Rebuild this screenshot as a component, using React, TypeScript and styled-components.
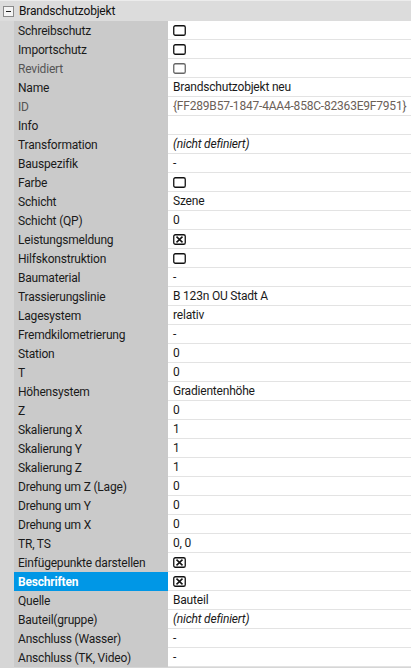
import styled, { createGlobalStyle } from "styled-components";

const GlobalStyle = createGlobalStyle`
  html, body {
    margin: 0;
    padding: 0;
    background: #ffffff;
  }
  body {
    font-family: Roboto, "Open Sans", sans-serif;
    font-size: 12px;
    letter-spacing: -0.2px;
    color: #1a1a1a;
  }
`;

type Kind = "text" | "check" | "italic";

interface IRow {
  label: string;
  kind: Kind;
  value?: string;
  checked?: boolean;
  disabled?: boolean;
  selected?: boolean;
}

const rows: IRow[] = [
  { label: "Schreibschutz", kind: "check" },
  { label: "Importschutz", kind: "check" },
  { label: "Revidiert", kind: "check", disabled: true },
  { label: "Name", kind: "text", value: "Brandschutzobjekt neu" },
  { label: "ID", kind: "text", value: "{FF289B57-1847-4AA4-858C-82363E9F7951}", disabled: true },
  { label: "Info", kind: "text", value: "" },
  { label: "Transformation", kind: "italic", value: "(nicht definiert)" },
  { label: "Bauspezifik", kind: "text", value: "-" },
  { label: "Farbe", kind: "check" },
  { label: "Schicht", kind: "text", value: "Szene" },
  { label: "Schicht (QP)", kind: "text", value: "0" },
  { label: "Leistungsmeldung", kind: "check", checked: true },
  { label: "Hilfskonstruktion", kind: "check" },
  { label: "Baumaterial", kind: "text", value: "-" },
  { label: "Trassierungslinie", kind: "text", value: "B 123n OU Stadt A" },
  { label: "Lagesystem", kind: "text", value: "relativ" },
  { label: "Fremdkilometrierung", kind: "text", value: "-" },
  { label: "Station", kind: "text", value: "0" },
  { label: "T", kind: "text", value: "0" },
  { label: "Höhensystem", kind: "text", value: "Gradientenhöhe" },
  { label: "Z", kind: "text", value: "0" },
  { label: "Skalierung X", kind: "text", value: "1" },
  { label: "Skalierung Y", kind: "text", value: "1" },
  { label: "Skalierung Z", kind: "text", value: "1" },
  { label: "Drehung um Z (Lage)", kind: "text", value: "0" },
  { label: "Drehung um Y", kind: "text", value: "0" },
  { label: "Drehung um X", kind: "text", value: "0" },
  { label: "TR, TS", kind: "text", value: "0, 0" },
  { label: "Einfügepunkte darstellen", kind: "check", checked: true },
  { label: "Beschriften", kind: "check", checked: true, selected: true },
  { label: "Quelle", kind: "text", value: "Bauteil" },
  { label: "Bauteil(gruppe)", kind: "italic", value: "(nicht definiert)" },
  { label: "Anschluss (Wasser)", kind: "text", value: "-" },
  { label: "Anschluss (TK, Video)", kind: "text", value: "-" },
];

const Grid = styled.div`
  width: 411px;
  height: 668px;
  overflow: hidden;
  background: #d6d6d6;
`;

const CategoryHeader = styled.div`
  height: 21px;
  display: flex;
  align-items: center;
  gap: 5px;
  padding-left: 3px;
  background: #dcdcdc;
  border-top: 1px solid #ececec;
  box-sizing: border-box;
  color: #111;
`;

const Row = styled.div`
  display: grid;
  grid-template-columns: 14px 154px 1fr;
  height: 19px;
`;

const Gutter = styled.div`
  background: #d6d6d6;
`;

const Label = styled.div<{ $disabled?: boolean; $selected?: boolean }>`
  display: flex;
  align-items: center;
  padding-left: 4px;
  white-space: nowrap;
  overflow: hidden;
  background: ${(p) => (p.$selected ? "#0097e6" : "#cacaca")};
  color: ${(p) => (p.$selected ? "#ffffff" : p.$disabled ? "#555555" : "#1a1a1a")};
  font-weight: ${(p) => (p.$selected ? 700 : 400)};
`;

const Value = styled.div<{ $disabled?: boolean; $italic?: boolean }>`
  display: flex;
  align-items: center;
  padding-left: 5px;
  white-space: nowrap;
  overflow: hidden;
  background: #ffffff;
  border-bottom: 1px solid #e3e3e3;
  color: ${(p) => (p.$disabled ? "#6b6058" : "#1a1a1a")};
  font-style: ${(p) => (p.$italic ? "italic" : "normal")};
`;

const CheckBox = ({ checked, disabled }: { checked?: boolean; disabled?: boolean }) => {
  const c = disabled ? "#666" : "#111";
  return (
    <svg width="13" height="11" viewBox="0 0 13 11">
      <rect x="0.75" y="0.75" width="11.5" height="9.5" rx="1.6" fill="none" stroke={c} strokeWidth="1.3" />
      {checked && <path d="M3.5 2.6 L9.5 8.4 M9.5 2.6 L3.5 8.4" stroke={c} strokeWidth="1.5" />}
    </svg>
  );
};

const Collapse = () => (
  <svg width="11" height="11" viewBox="0 0 11 11">
    <rect x="0.5" y="0.5" width="10" height="10" fill="#f4f4f4" stroke="#8a8a8a" />
    <path d="M3 5.5 H8" stroke="#222" strokeWidth="1" />
  </svg>
);

const App = () => {
  return (
    <Grid>
      <GlobalStyle />
      <CategoryHeader>
        <Collapse />
        <span>Brandschutzobjekt</span>
      </CategoryHeader>
      {rows.map((r) => (
        <Row key={r.label}>
          <Gutter />
          <Label $disabled={r.disabled} $selected={r.selected}>
            {r.label}
          </Label>
          <Value $disabled={r.disabled} $italic={r.kind === "italic"}>
            {r.kind === "check" ? <CheckBox checked={r.checked} disabled={r.disabled} /> : r.value}
          </Value>
        </Row>
      ))}
    </Grid>
  );
};
export default App;
